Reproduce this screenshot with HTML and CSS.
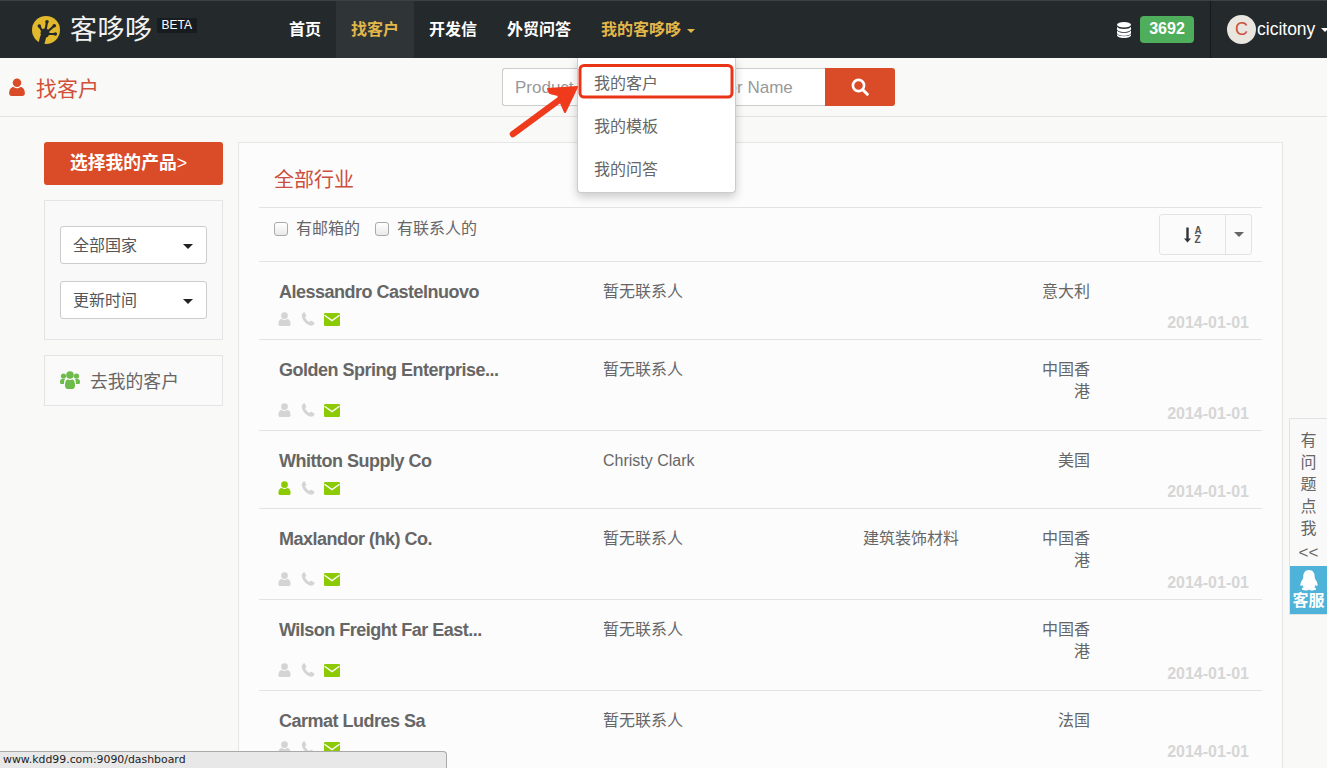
FILE: index.html
```html
<!DOCTYPE html>
<html>
<head>
    <meta charset="utf-8"/>
    <title>客哆哆 - 找客户</title>
    <link rel="stylesheet" href="styles.css">
</head>

<body>
<svg class="icon-defs" width="0" height="0">
    <symbol id="i-user" viewBox="1 0 14 16">
        <circle cx="8" cy="4.200" r="3.800"/>
        <path d="M1 13.600C1 10.200 2.800 8 5 8c.8.7 1.800 1.100 3 1.100S10.200 8.700 11 8c2.200 0 4 2.200 4 5.600C15 15.200 14 16 12.800 16H3.200C2 16 1 15.200 1 13.600z"/>
    </symbol>
    <symbol id="i-phone" viewBox="0 0 16 16">
        <path d="M4.300.6 6 3.900c.2.400.1.700-.2 1L4.600 6c.7 1.900 3 4.500 5 5.400l1.200-1.200c.3-.3.700-.4 1.100-.2l3.200 1.900c.3.200.4.500.3.800-.3 1.400-1.500 2.900-3 2.900C7 15.600.9 8.800.9 4.200c0-1.500 1.200-3.100 2.600-3.800.3-.1.600 0 .8.200z"/>
    </symbol>
    <symbol id="i-mail" viewBox="0 0 16 13">
        <rect width="16" height="13" rx="1.200" fill="#8ccb04"/>
        <path d="M.5 2.200 8 7.600l7.500-5.400" fill="none" stroke="#fff" stroke-width="1.300"/>
    </symbol>
</svg>

<header class="topbar">
    <a class="logo">
        <svg class="logo-mark" viewBox="0 0 28 28">
            <circle cx="14" cy="14" r="14" fill="#e2b92d"/>
            <g fill="none" stroke="#24292c" stroke-linecap="round">
                <path d="M12 18 7.500 10.500M13 17 15 6M14 17 22 10M14 18 23 18" stroke-width="2.200"/>
                <path d="M13 16.500c-1.500 3-2.500 6-3.500 11" stroke-width="6"/>
            </g>
            <circle cx="13" cy="17" r="4.500" fill="#24292c"/>
            <circle cx="7.300" cy="10" r="1.800" fill="#24292c"/>
            <circle cx="15" cy="5.700" r="1.800" fill="#24292c"/>
            <circle cx="22.300" cy="9.700" r="1.800" fill="#24292c"/>
            <circle cx="23.300" cy="18" r="1.800" fill="#24292c"/>
        </svg>
        <span class="logo-text">客哆哆</span>
        <span class="beta">BETA</span>
    </a>
    <ul class="nav">
        <li>首页</li>
        <li class="active">找客户</li>
        <li>开发信</li>
        <li>外贸问答</li>
        <li class="open">
            我的客哆哆<i class="caret"></i>
            <ul class="dropdown">
                <li>我的客户</li>
                <li>我的模板</li>
                <li>我的问答</li>
            </ul>
        </li>
    </ul>
    <div class="credit">
        <svg class="db-icon" viewBox="0 0 14 16">
            <ellipse cx="7" cy="2.800" rx="7" ry="2.800"/>
            <path d="M0 4.800c1 1.500 3.500 2.200 7 2.200s6-.7 7-2.200v2.400C14 8.800 11 10 7 10S0 8.800 0 7.200z"/>
            <path d="M0 8.500C1 10 3.500 10.800 7 10.800s6-.8 7-2.300v2.500c0 1.600-3 2.800-7 2.800S0 12.600 0 11z"/>
            <path d="M0 12C1 13.500 3.500 14.200 7 14.200S13 13.500 14 12v1.200c0 1.600-3 2.800-7 2.800s-7-1.200-7-2.800z"/>
        </svg>
        <span class="credit-num">3692</span>
    </div>
    <div class="account">
        <span class="avatar">C</span>
        <span class="account-name">cicitony</span>
        <i class="caret white"></i>
    </div>
</header>

<div class="subbar">
    <h1 class="page-title">
        <svg class="title-icon"><use href="#i-user"/></svg>
        找客户
    </h1>
    <form class="search">
        <input class="search-input" type="text" placeholder="Product Keyword or Customer Name">
        <button class="search-btn" type="button">
            <svg viewBox="0 0 18 18" width="18" height="18">
                <circle cx="7.500" cy="7.500" r="5.600" fill="none" stroke="#fff" stroke-width="2.600"/>
                <path d="M11.800 11.800 16.300 16.300" stroke="#fff" stroke-width="3" stroke-linecap="round"/>
            </svg>
        </button>
    </form>
</div>

<div class="content">
    <aside class="sidebar">
        <a class="pick-btn">选择我的产品<span class="pick-arrow">&gt;</span></a>
        <div class="filter-box">
            <div class="select">全部国家<i class="caret dark"></i></div>
            <div class="select">更新时间<i class="caret dark"></i></div>
        </div>
        <a class="link-box">
            <svg class="users-icon" viewBox="0 0 20 18">
                <circle cx="3.500" cy="5" r="2.600"/>
                <circle cx="16.500" cy="5" r="2.600"/>
                <circle cx="10" cy="4" r="3.800"/>
                <path d="M0 11c0-2 1-3.200 3.500-3.200.6 0 1 .1 1.400.3C4.300 9.500 4 11 4 13H1.200C.5 13 0 12.500 0 11zM20 11c0-2-1-3.200-3.500-3.200-.6 0-1 .1-1.400.3.600 1.400.9 2.900.9 4.900h2.800c.7 0 1.200-.5 1.200-2z"/>
                <path d="M5 14.500C5 11 6 8.500 8 8.500c.6.400 1.200.6 2 .6s1.400-.2 2-.6c2 0 3 2.500 3 6 0 2-1 3.500-2.500 3.500h-5C6 18 5 16.500 5 14.500z"/>
            </svg>
            去我的客户
        </a>
    </aside>

    <main class="card">
        <h2 class="card-title">全部行业</h2>
        <div class="toolbar">
            <label class="check"><input type="checkbox">有邮箱的</label>
            <label class="check"><input type="checkbox">有联系人的</label>
            <div class="sort">
                <span class="sort-main">
                    <svg viewBox="0 0 9 16" width="9" height="16">
                        <path d="M4.500 15.500 1 11.500h2.300V.5h2.400v11H8z" fill="#333"/>
                    </svg>
                    <span class="sort-az">A<br>Z</span>
                </span>
                <span class="sort-side"><i class="caret grey"></i></span>
            </div>
        </div>

        <div class="row">
            <div class="name">Alessandro Castelnuovo</div>
            <div class="cell">暂无联系人</div>
            <div class="cell"></div>
            <div class="cell country">意大利</div>
            <div class="cell"></div>
            <div class="contact-icons">
                <svg class="ic-user"><use href="#i-user"/></svg>
                <svg class="ic-phone"><use href="#i-phone"/></svg>
                <svg class="ic-mail"><use href="#i-mail"/></svg>
            </div>
            <div class="date">2014-01-01</div>
        </div>
        <div class="row">
            <div class="name">Golden Spring Enterprise...</div>
            <div class="cell">暂无联系人</div>
            <div class="cell"></div>
            <div class="cell country">中国香港</div>
            <div class="cell"></div>
            <div class="contact-icons">
                <svg class="ic-user"><use href="#i-user"/></svg>
                <svg class="ic-phone"><use href="#i-phone"/></svg>
                <svg class="ic-mail"><use href="#i-mail"/></svg>
            </div>
            <div class="date">2014-01-01</div>
        </div>
        <div class="row">
            <div class="name">Whitton Supply Co</div>
            <div class="cell">Christy Clark</div>
            <div class="cell"></div>
            <div class="cell country">美国</div>
            <div class="cell"></div>
            <div class="contact-icons">
                <svg class="ic-user on"><use href="#i-user"/></svg>
                <svg class="ic-phone"><use href="#i-phone"/></svg>
                <svg class="ic-mail"><use href="#i-mail"/></svg>
            </div>
            <div class="date">2014-01-01</div>
        </div>
        <div class="row">
            <div class="name">Maxlandor (hk) Co.</div>
            <div class="cell">暂无联系人</div>
            <div class="cell">建筑装饰材料</div>
            <div class="cell country">中国香港</div>
            <div class="cell"></div>
            <div class="contact-icons">
                <svg class="ic-user"><use href="#i-user"/></svg>
                <svg class="ic-phone"><use href="#i-phone"/></svg>
                <svg class="ic-mail"><use href="#i-mail"/></svg>
            </div>
            <div class="date">2014-01-01</div>
        </div>
        <div class="row">
            <div class="name">Wilson Freight Far East...</div>
            <div class="cell">暂无联系人</div>
            <div class="cell"></div>
            <div class="cell country">中国香港</div>
            <div class="cell"></div>
            <div class="contact-icons">
                <svg class="ic-user"><use href="#i-user"/></svg>
                <svg class="ic-phone"><use href="#i-phone"/></svg>
                <svg class="ic-mail"><use href="#i-mail"/></svg>
            </div>
            <div class="date">2014-01-01</div>
        </div>
        <div class="row">
            <div class="name">Carmat Ludres Sa</div>
            <div class="cell">暂无联系人</div>
            <div class="cell"></div>
            <div class="cell country">法国</div>
            <div class="cell"></div>
            <div class="contact-icons">
                <svg class="ic-user"><use href="#i-user"/></svg>
                <svg class="ic-phone"><use href="#i-phone"/></svg>
                <svg class="ic-mail"><use href="#i-mail"/></svg>
            </div>
            <div class="date">2014-01-01</div>
        </div>
    </main>
</div>

<!-- red annotation drawn over the screenshot -->
<svg class="annotation" width="1327" height="768" viewBox="0 0 1327 768">
    <rect x="580" y="65.500" width="152" height="31.500" rx="4" fill="none" stroke="#ea3418" stroke-width="3"/>
    <path d="M513 134 566 95" stroke="#f03a1c" stroke-width="6.500" stroke-linecap="round"/>
    <path d="M577 87 548 89 550 93 558 95 561 103 565 112z" fill="#f03a1c" stroke="#f03a1c" stroke-width="2" stroke-linejoin="round"/>
</svg>

<div class="side-help">
    <div class="side-text">有<br>问<br>题<br>点<br>我<br><span class="side-more">&lt;&lt;</span></div>
    <div class="side-qq">
        <svg viewBox="0 0 20 22" width="20" height="21">
            <path d="M10 0c4 0 6 3 6 7 0 1 0 1.500.5 2.500 1.300 2 2.700 4.500 2.500 6.500-.2 1.200-1 1-2-.5-.3 1.200-.8 2-1.500 2.700 1 .4 2 1 2 1.800 0 1-2 1.500-4 1.500-1.500 0-3-.4-3.500-1-.5.6-2 1-3.500 1-2 0-4-.5-4-1.500 0-.8 1-1.400 2-1.800-.7-.7-1.200-1.500-1.500-2.700C2 17 1.200 17.200 1 16c-.2-2 1.200-4.500 2.500-6.500C4 8.500 4 8 4 7c0-4 2-7 6-7z" fill="#fff"/>
        </svg>
        <span>客服</span>
    </div>
</div>

<div class="status-url">www.kdd99.com:9090/dashboard</div>
</body>
</html>
```

FILE: styles.css
```css
* {
    margin: 0;
    padding: 0;
    box-sizing: border-box;
}
html, body {
    height: 100%;
    overflow: hidden;
}
body {
    background: #f9f9f7;
    color: #666;
    font-family: "Liberation Sans", "Noto Sans CJK SC", sans-serif;
    font-size: 16px;
}
ul {
    list-style: none;
}
.icon-defs {
    position: absolute;
}

/* top bar */
.topbar {
    display: flex;
    align-items: center;
    height: 58px;
    background: #24292c;
    border-top: 1px solid #3c4144;
    color: #fff;
}
.logo {
    display: flex;
    align-items: center;
    width: 274px;
    height: 57px;
    padding: 1px 0 0 32px;
}
.logo-mark {
    width: 28px;
    height: 28px;
    flex: none;
}
.logo-text {
    margin-left: 10px;
    font-size: 27px;
    line-height: 30px;
    color: #f2f2f2;
    letter-spacing: .5px;
}
.beta {
    align-self: flex-start;
    margin: 16px 0 0 4px;
    padding: 0 5px;
    background: #191c1e;
    font-size: 12px;
    line-height: 15px;
}
.nav {
    display: flex;
    height: 57px;
    font-weight: bold;
}
.nav > li {
    position: relative;
    padding: 0 15px;
    line-height: 58px;
}
.nav .active {
    background: #2f3436;
    color: #e2b74a;
}
.nav .open {
    color: #e2b74a;
}
.caret {
    display: inline-block;
    width: 0;
    height: 0;
    margin-left: 6px;
    vertical-align: middle;
    border-top: 4px solid #e2b74a;
    border-left: 4px solid transparent;
    border-right: 4px solid transparent;
}
.caret.white {
    border-top-color: #fff;
}
.caret.dark {
    border-top-color: #222;
    border-top-width: 5px;
    border-left-width: 5.500px;
    border-right-width: 5.500px;
}
.caret.grey {
    border-top-color: #666;
    border-top-width: 5px;
    border-left-width: 5px;
    border-right-width: 5px;
}
.dropdown {
    position: absolute;
    z-index: 10;
    top: 57px;
    left: -9px;
    width: 159px;
    height: 135px;
    padding-top: 4px;
    background: #fff;
    border: 1px solid #ccc;
    border-top: 0;
    border-radius: 0 0 4px 4px;
    box-shadow: 0 4px 10px rgba(0, 0, 0, .2);
    color: #666;
    font-weight: normal;
    line-height: 43px;
}
.dropdown li {
    padding-left: 16px;
}
.credit {
    display: flex;
    align-items: center;
    margin-left: auto;
    height: 57px;
}
.db-icon {
    width: 14px;
    height: 16px;
    fill: #fff;
}
.credit-num {
    margin: 0 16px 0 9px;
    width: 54px;
    height: 27px;
    background: #4fae5b;
    border-radius: 4px;
    font-weight: bold;
    line-height: 26px;
    text-align: center;
}
.account {
    display: flex;
    align-items: center;
    width: 117px;
    height: 57px;
    padding-left: 16px;
    border-left: 1px solid #171a1c;
    white-space: nowrap;
}
.avatar {
    flex: none;
    width: 29px;
    height: 29px;
    background: #e9e5df;
    border-radius: 50%;
    color: #cf4f3a;
    font-size: 18px;
    line-height: 29px;
    text-align: center;
}
.account-name {
    margin-left: 1px;
    font-size: 17.500px;
}

/* title and search strip */
.subbar {
    position: relative;
    display: flex;
    align-items: center;
    height: 59px;
    border-bottom: 1px solid #e3e3e3;
}
.page-title {
    display: flex;
    align-items: center;
    padding-left: 9px;
    color: #d0503a;
    font-size: 21px;
    font-weight: normal;
}
.title-icon {
    width: 16px;
    height: 18px;
    margin-right: 11px;
    fill: #da4b28;
}
.search {
    display: flex;
    position: absolute;
    left: 502px;
    top: 10px;
}
.search-input {
    width: 323px;
    height: 38px;
    padding: 2px 12px 0;
    background: #fff;
    border: 1px solid #ccc;
    border-right: 0;
    border-radius: 3px 0 0 3px;
    font: 17px "Liberation Sans", sans-serif;
}
.search-input::placeholder {
    color: #999;
}
.search-btn {
    display: flex;
    align-items: center;
    justify-content: center;
    width: 70px;
    height: 38px;
    background: #da4b28;
    border: 0;
    border-radius: 0 3px 3px 0;
}

/* main area */
.content {
    display: flex;
    align-items: flex-start;
    gap: 15px;
    height: 651px;
    padding: 25px 0 0 44px;
    overflow: hidden;
}
.sidebar {
    width: 179px;
    flex: none;
}
.pick-btn {
    display: block;
    height: 43px;
    padding-left: 26px;
    background: #da4b28;
    border-radius: 3px;
    color: #fff;
    font-size: 17.800px;
    font-weight: bold;
    line-height: 43px;
}
.pick-arrow {
    font-weight: normal;
}
.filter-box {
    height: 140px;
    margin-top: 15px;
    padding: 25px 15px 0;
    background: #f9f9f9;
    border: 1px solid #e4e4e4;
}
.select {
    display: flex;
    align-items: center;
    justify-content: space-between;
    height: 38px;
    margin-bottom: 17px;
    padding: 0 13px 2px 12px;
    background: #fff;
    border: 1px solid #ccc;
    border-radius: 3px;
    color: #555;
}
.select .caret {
    margin-top: 4px;
}
.link-box {
    display: flex;
    align-items: center;
    height: 51px;
    margin-top: 15px;
    padding: 0 0 2px 15px;
    background: #fafafa;
    border: 1px solid #e4e4e4;
    font-size: 17.800px;
}
.users-icon {
    width: 20px;
    height: 18px;
    margin-right: 10px;
    fill: #6dbb4b;
}
.card {
    width: 1045px;
    height: 626px;
    padding: 0 20px;
    background: #fcfcfc;
    border: 1px solid #e6e6e6;
    border-bottom: 0;
    overflow: hidden;
}
.card-title {
    height: 65px;
    padding-left: 15px;
    color: #cb4f3e;
    font-size: 20px;
    font-weight: normal;
    line-height: 75px;
    border-bottom: 1px solid #e3e3e3;
}
.toolbar {
    display: flex;
    height: 54px;
    padding: 6px 10px 0 15px;
    border-bottom: 1px solid #e3e3e3;
}
.check {
    display: flex;
    align-items: center;
    height: 28px;
    margin: -1px 15px 0 0;
}
.check input {
    appearance: none;
    width: 14px;
    height: 14px;
    margin: 4px 8px 0 0;
    background: linear-gradient(#fff, #e9e9e9);
    border: 1px solid #aaa;
    border-radius: 3px;
}
.sort {
    display: flex;
    height: 41px;
    margin-left: auto;
    background: #fbfbfb;
    border: 1px solid #e3e3e3;
    border-radius: 3px;
}
.sort-main {
    display: flex;
    align-items: center;
    justify-content: center;
    width: 66px;
    border-right: 1px solid #e3e3e3;
}
.sort-az {
    margin-left: 2px;
    color: #555;
    font-size: 10px;
    font-weight: bold;
    line-height: 9px;
}
.sort-side {
    display: flex;
    align-items: center;
    justify-content: center;
    width: 25px;
}
.sort-side .caret {
    margin: 0;
}

/* customer rows */
.row {
    display: grid;
    grid-template-columns: 324px 260px 177px 50px 159px;
    grid-template-rows: minmax(31px, auto) 27px;
    padding: 19px 13px 0 20px;
    border-bottom: 1px solid #e3e3e3;
    line-height: 22px;
}
.name {
    color: #666;
    font-size: 18px;
    font-weight: bold;
    letter-spacing: -.5px;
    white-space: nowrap;
}
.country {
    text-align: right;
}
.contact-icons {
    display: flex;
    grid-column: 1 / 5;
    height: 16px;
    margin: -1px 0 0 -1px;
}
.contact-icons svg {
    flex: none;
}
.ic-user {
    width: 13px;
    height: 14px;
    margin-top: 1px;
    fill: #d4d4d4;
}
.ic-user.on {
    fill: #8ccb04;
}
.ic-phone {
    width: 14px;
    height: 14px;
    margin: 1px 0 0 10px;
    fill: #d4d4d4;
}
.ic-mail {
    width: 16px;
    height: 13px;
    margin: 2px 0 0 9px;
}
.date {
    color: #d6d6d6;
    font-weight: bold;
    text-align: right;
}

/* things lying over the page */
.annotation {
    position: fixed;
    z-index: 20;
    left: 0;
    top: 0;
    pointer-events: none;
}
.side-help {
    position: fixed;
    z-index: 5;
    right: 0;
    top: 418px;
    width: 38px;
    background: #f9f9f9;
    border: 1px solid #e2e2e2;
    border-right: 0;
    text-align: center;
}
.side-text {
    height: 147px;
    padding-top: 11px;
    line-height: 22px;
}
.side-more {
    font-size: 17px;
    line-height: 26px;
}
.side-qq {
    display: flex;
    flex-direction: column;
    align-items: center;
    height: 48px;
    padding-top: 4px;
    background: #4fb3d9;
    color: #fff;
    font-weight: bold;
    line-height: 20px;
}
.status-url {
    position: fixed;
    z-index: 30;
    left: 0;
    bottom: 0;
    width: 447px;
    height: 17px;
    padding-left: 3px;
    background: #e8e8e8;
    border: 1px solid #a9a9a9;
    border-left: 0;
    border-bottom: 0;
    border-radius: 0 4px 0 0;
    color: #222;
    font-family: "DejaVu Sans", sans-serif;
    font-size: 10.900px;
    line-height: 16px;
}
```
